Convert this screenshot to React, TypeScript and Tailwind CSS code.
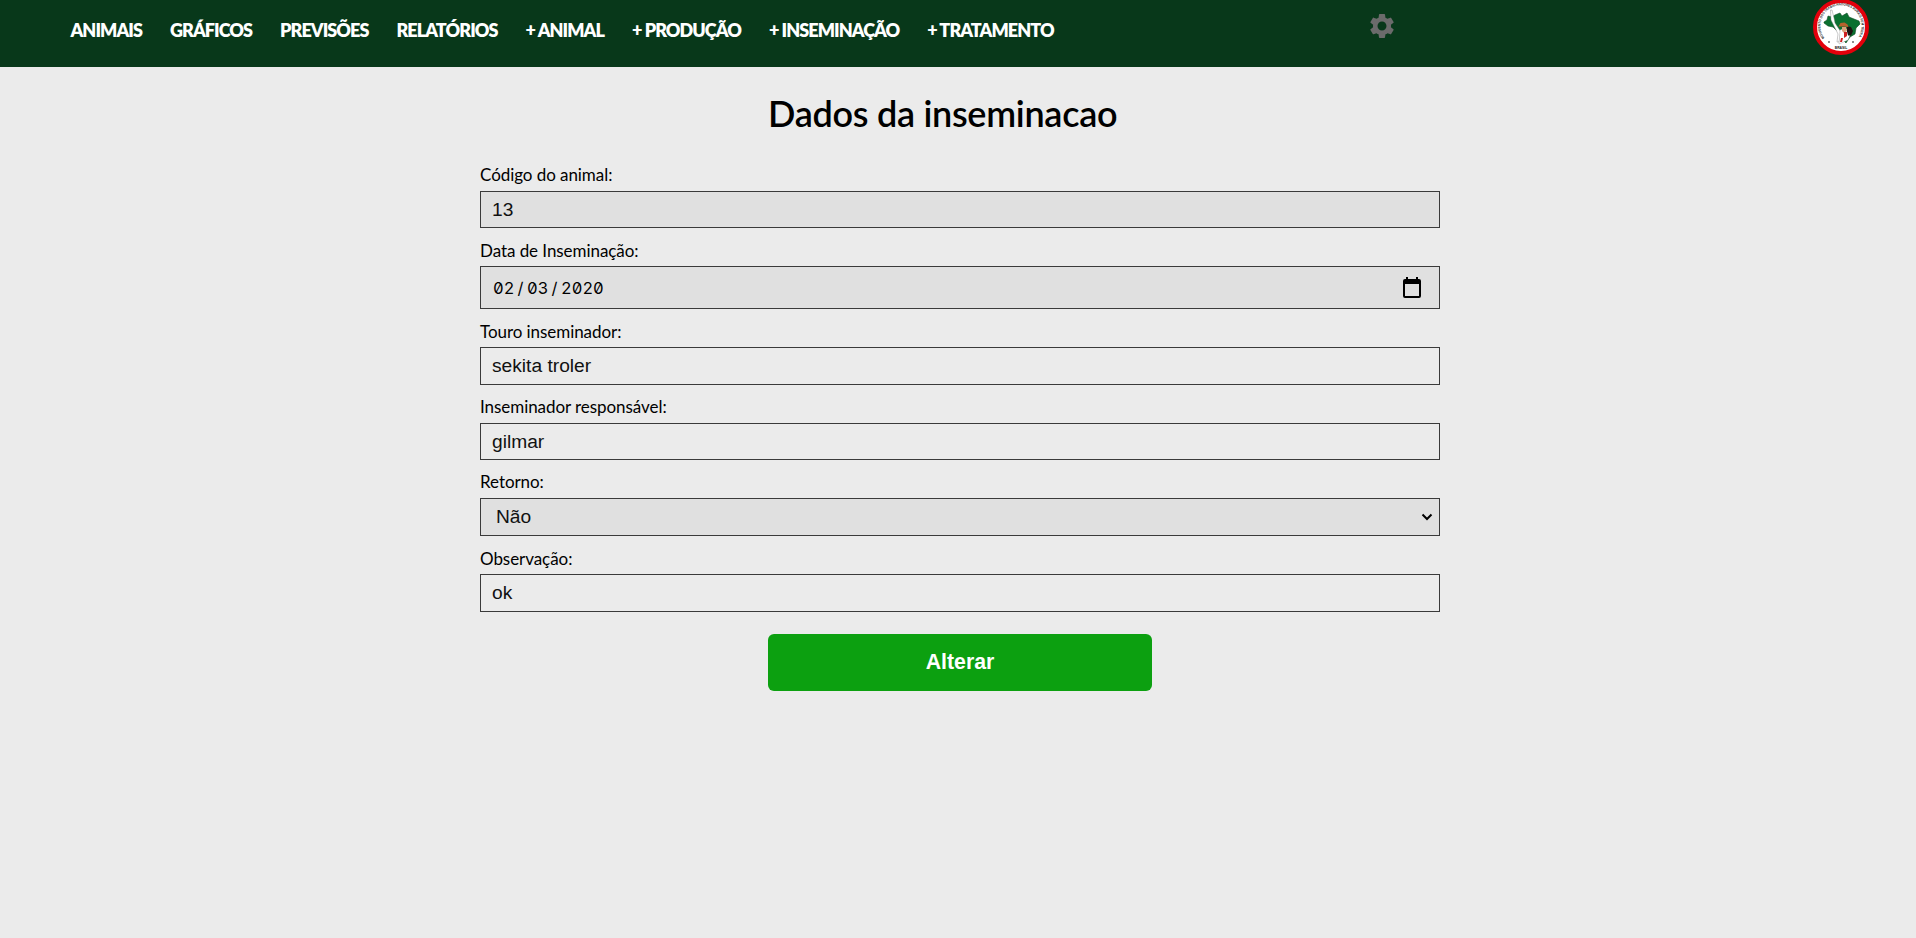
import type { ReactNode } from "react";
import { MdSettings } from "react-icons/md";

const links = ["ANIMAIS", "GRÁFICOS", "PREVISÕES", "RELATÓRIOS", "+ ANIMAL", "+ PRODUÇÃO", "+ INSEMINAÇÃO", "+ TRATAMENTO"];

function Logo() {
  return (
    <svg viewBox="0 0 56 56" className="h-14 w-14">
      <defs>
        <path id="ring" d="M11.500 38a20.500 20.500 0 1 1 33 0" />
      </defs>
      <circle cx="28" cy="27" r="26" fill="#fff" stroke="#e3000b" strokeWidth="4" />
      <text fontSize="3.6" fontWeight="700" fontFamily="Liberation Sans" fill="#333">
        <textPath href="#ring" textLength="88" lengthAdjust="spacingAndGlyphs">MOVIMENTO DOS TRABALHADORES RURAIS SEM TERRA</textPath>
      </text>
      <text x="28" y="48.5" fontSize="3.4" fontWeight="700" textAnchor="middle" fontFamily="Liberation Sans" fill="#222">BRASIL</text>
      <path fill="#0a7030" stroke="#0d4a22" strokeWidth=".6" d="M11 22l3-2 1-4 4 1 3-2 5-2 2 3 5-3 2 4 5 2 5 2 1 3-4 4-1 6-5 3-4 6-3-3-2-6-5-4-3-3-5-1-4-3z" />
      <path fill="#fff" stroke="#777" strokeWidth=".4" d="M17.500 10l1.500 0 2 8 1 5 4 6 2 3-2 10-2 0 1-8-5-10-2-4z" />
      <path fill="#fff" stroke="#777" strokeWidth=".3" d="M27 30l5-2 6 5-3 7-9 4z" />
      <path fill="#1c1410" d="M34 26l4 1 2 4-2 4.500-3 0-1-4z" />
      <path fill="#d9a27c" d="M29 27l4 0 1 4-3 2-2-2z" />
      <path fill="#b5622d" d="M25.500 26.500l2-3.500 4-.5 3 2 1 2.500-5-.5z" />
      <path fill="#cf2020" d="M31 32l3 0 0 4-3 2zM28 38l2 0-1 4-2 0z" />
      <path fill="#222" d="M15 42l1-1 1 1-1 1zM39 42l1-1 1 1-1 1z" />
    </svg>
  );
}

function Field({ label, gap, children }: { label: string; gap: string; children: ReactNode }) {
  return (
    <div className={gap}>
      <label className="block text-[17px] leading-6 tracking-[-0.06px] text-black">{label}</label>
      {children}
    </div>
  );
}

const box = "w-full rounded-none border border-[#3a3a3a] px-[11px] font-['Liberation_Sans',Arial,sans-serif] text-[19.2px] text-[#111] outline-none";

export default function App() {
  return (
    <div className="min-h-screen bg-[#ebebeb] font-['Lato',sans-serif]">
      <header className="flex h-[67px] items-start bg-[#08381a]">
        <nav className="flex w-[1370px] gap-7 pl-[70.5px] pt-[18px]">
          {links.map((l) => (
            <a key={l} href="#" className="whitespace-nowrap text-[18px] font-extrabold leading-6 tracking-[-0.94px] text-white">{l}</a>
          ))}
        </nav>
        <MdSettings className="mt-[11px] -ml-[3px] size-[30px] text-[#6b6b6b]" />
        <div className="ml-auto mr-[47px]"><Logo /></div>
      </header>
      <main>
        <h1 className="ml-[768px] mt-6 h-12 text-[36px] font-semibold leading-[45px] tracking-[-0.28px] text-black">Dados da inseminacao</h1>
        <form className="ml-[480px] w-[960px]">
          <Field label="Código do animal:" gap="flex flex-col gap-1 pt-6">
            <input className={box + " block h-[37px] bg-[#e0e0e0]"} defaultValue="13" />
          </Field>
          <Field label="Data de Inseminação:" gap="flex flex-col gap-[3px] pt-[11px]">
            <div className={box + " flex h-[43px] items-center justify-between bg-[#e0e0e0]"}>
              <span className="flex pl-px pt-0.5 font-['Inter'] text-[16.5px] text-black [font-feature-settings:'zero','tnum']">
                <span className="w-[22.5px]">02</span>
                <span className="w-[11.5px] pl-[2px]">/</span>
                <span className="w-[22.5px]">03</span>
                <span className="w-[11.5px] pl-[2px]">/</span>
                <span>2020</span>
              </span>
              <svg viewBox="0 0 20 22" className="mr-[6px] h-[22px] w-5">
                <path fillRule="evenodd" d="M4 0h2v2h8V0h2v2h1a2 2 0 0 1 2 2v15a2 2 0 0 1-2 2H3a2 2 0 0 1-2-2V4a2 2 0 0 1 2-2h1zM3 7v12h14V7z" />
              </svg>
            </div>
          </Field>
          <Field label="Touro inseminador:" gap="flex flex-col gap-[3px] pt-[11px]">
            <input className={box + " block h-[38px] bg-transparent"} defaultValue="sekita troler" />
          </Field>
          <Field label="Inseminador responsável:" gap="flex flex-col gap-1 pt-[10px]">
            <input className={box + " block h-[37px] bg-transparent"} defaultValue="gilmar" />
          </Field>
          <Field label="Retorno:" gap="flex flex-col gap-1 pt-[10px]">
            <div className="grid items-center">
              <select className={box + " col-start-1 row-start-1 h-[38px] appearance-none bg-[#e0e0e0] pl-[15px]!"} defaultValue="Não">
                <option>Não</option>
              </select>
              <svg viewBox="0 0 12 8" className="pointer-events-none col-start-1 row-start-1 mr-[7px] h-2 w-3 justify-self-end" fill="none" stroke="#000" strokeWidth="2">
                <path d="M1.500 1.500L6 6l4.500-4.500" />
              </svg>
            </div>
          </Field>
          <Field label="Observação:" gap="flex flex-col gap-[3px] pt-[11px]">
            <input className={box + " block h-[38px] bg-transparent"} defaultValue="ok" />
          </Field>
          <button type="button" className="mx-auto mt-[22px] block h-[57px] w-96 rounded-md bg-[#0ca010] font-['Liberation_Sans',Arial,sans-serif] text-[21.3px] font-bold text-white">Alterar</button>
        </form>
      </main>
    </div>
  );
}
